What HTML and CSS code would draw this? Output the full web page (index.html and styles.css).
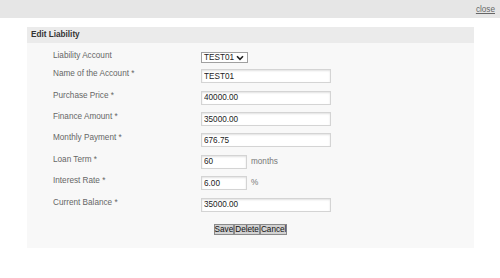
FILE: index.html
```html
<!DOCTYPE html>
<html lang="en">
<head>
    <meta charset="UTF-8">
    <title>Edit Liability</title>
    <link rel="stylesheet" href="styles.css">
</head>
<body>
    <div class="topbar">
        <a href="#" class="close-link">close</a>
    </div>

    <div class="panel">
        <div class="panel-header">Edit Liability</div>
        <form class="panel-body">
            <div class="row row-select">
                <label>Liability Account</label>
                <div class="fake-select">
                    <span>TEST01</span>
                    <svg width="8" height="6" viewBox="0 0 8 6"><path d="M1 1.2 L4 4.4 L7 1.2" fill="none" stroke="#222" stroke-width="1.6"/></svg>
                </div>
            </div>
            <div class="row">
                <label>Name of the Account *</label>
                <input type="text" class="field" value="TEST01">
            </div>
            <div class="row">
                <label>Purchase Price *</label>
                <input type="text" class="field" value="40000.00">
            </div>
            <div class="row">
                <label>Finance Amount *</label>
                <input type="text" class="field" value="35000.00">
            </div>
            <div class="row">
                <label>Monthly Payment *</label>
                <input type="text" class="field" value="676.75">
            </div>
            <div class="row">
                <label>Loan Term *</label>
                <input type="text" class="field short" value="60">
                <span class="unit">months</span>
            </div>
            <div class="row">
                <label>Interest Rate *</label>
                <input type="text" class="field short" value="6.00">
                <span class="unit">%</span>
            </div>
            <div class="row">
                <label>Current Balance *</label>
                <input type="text" class="field" value="35000.00">
            </div>
            <div class="buttons"><button type="button">Save</button><button type="button">Delete</button><button type="button">Cancel</button></div>
        </form>
    </div>
</body>
</html>
```

FILE: styles.css
```css
body {
    margin: 0;
    padding: 0;
    background: #fff;
    font-family: "Liberation Sans", Arial, sans-serif;
    font-size: 8.2px;
    color: #333;
}

.topbar {
    height: 18px;
    background: #e6e6e6;
    display: flex;
    justify-content: flex-end;
    align-items: center;
    padding-right: 5px;
}
.close-link {
    color: #666;
    text-decoration: underline;
    font-size: 8.2px;
}

.panel {
    margin: 9px 0 0 27px;
    width: 447px;
}
.panel-header {
    height: 16px;
    line-height: 16px;
    background: #ebebeb;
    padding-left: 4px;
    font-weight: bold;
    color: #333;
}
.panel-body {
    margin: 0;
    background: #f8f8f8;
    padding: 9px 0 12.7px 0;
}

.row {
    display: flex;
    align-items: flex-start;
    height: 14px;
    margin-bottom: 7.4px;
    padding-left: 26px;
}
.row label {
    width: 148px;
    line-height: 10px;
    color: #666;
}
.row-select {
    height: 11px;
    margin-bottom: 6.3px;
}
.row-select label {
    line-height: 8px;
}

.fake-select {
    box-sizing: border-box;
    width: 47px;
    height: 11px;
    border: 1px solid #a0a0a0;
    background: #fff;
    display: flex;
    align-items: center;
    justify-content: space-between;
    padding: 0 3px 0 2px;
    color: #222;
    line-height: 9px;
}
.fake-select svg {
    display: block;
}

.field {
    box-sizing: border-box;
    width: 130px;
    height: 14px;
    margin: 0;
    padding: 0 2px;
    border: 1px solid #d4d4d4;
    box-shadow: inset 0 1px 2px rgba(0, 0, 0, 0.12);
    background: #fff;
    font-family: "Liberation Sans", Arial, sans-serif;
    font-size: 8.2px;
    color: #222;
    outline: none;
}
.field.short {
    width: 46px;
}
.unit {
    margin-left: 4px;
    line-height: 14px;
    color: #777;
}

.buttons {
    display: flex;
    justify-content: center;
    margin-top: 12.3px;
}
.buttons button {
    box-sizing: border-box;
    height: 11.3px;
    margin: 0;
    padding: 0;
    border: 1px solid #8a8a8a;
    background: #d2d2d2;
    font-family: "Liberation Sans", Arial, sans-serif;
    font-size: 8.2px;
    line-height: 9px;
    color: #111;
    cursor: pointer;
}
```
